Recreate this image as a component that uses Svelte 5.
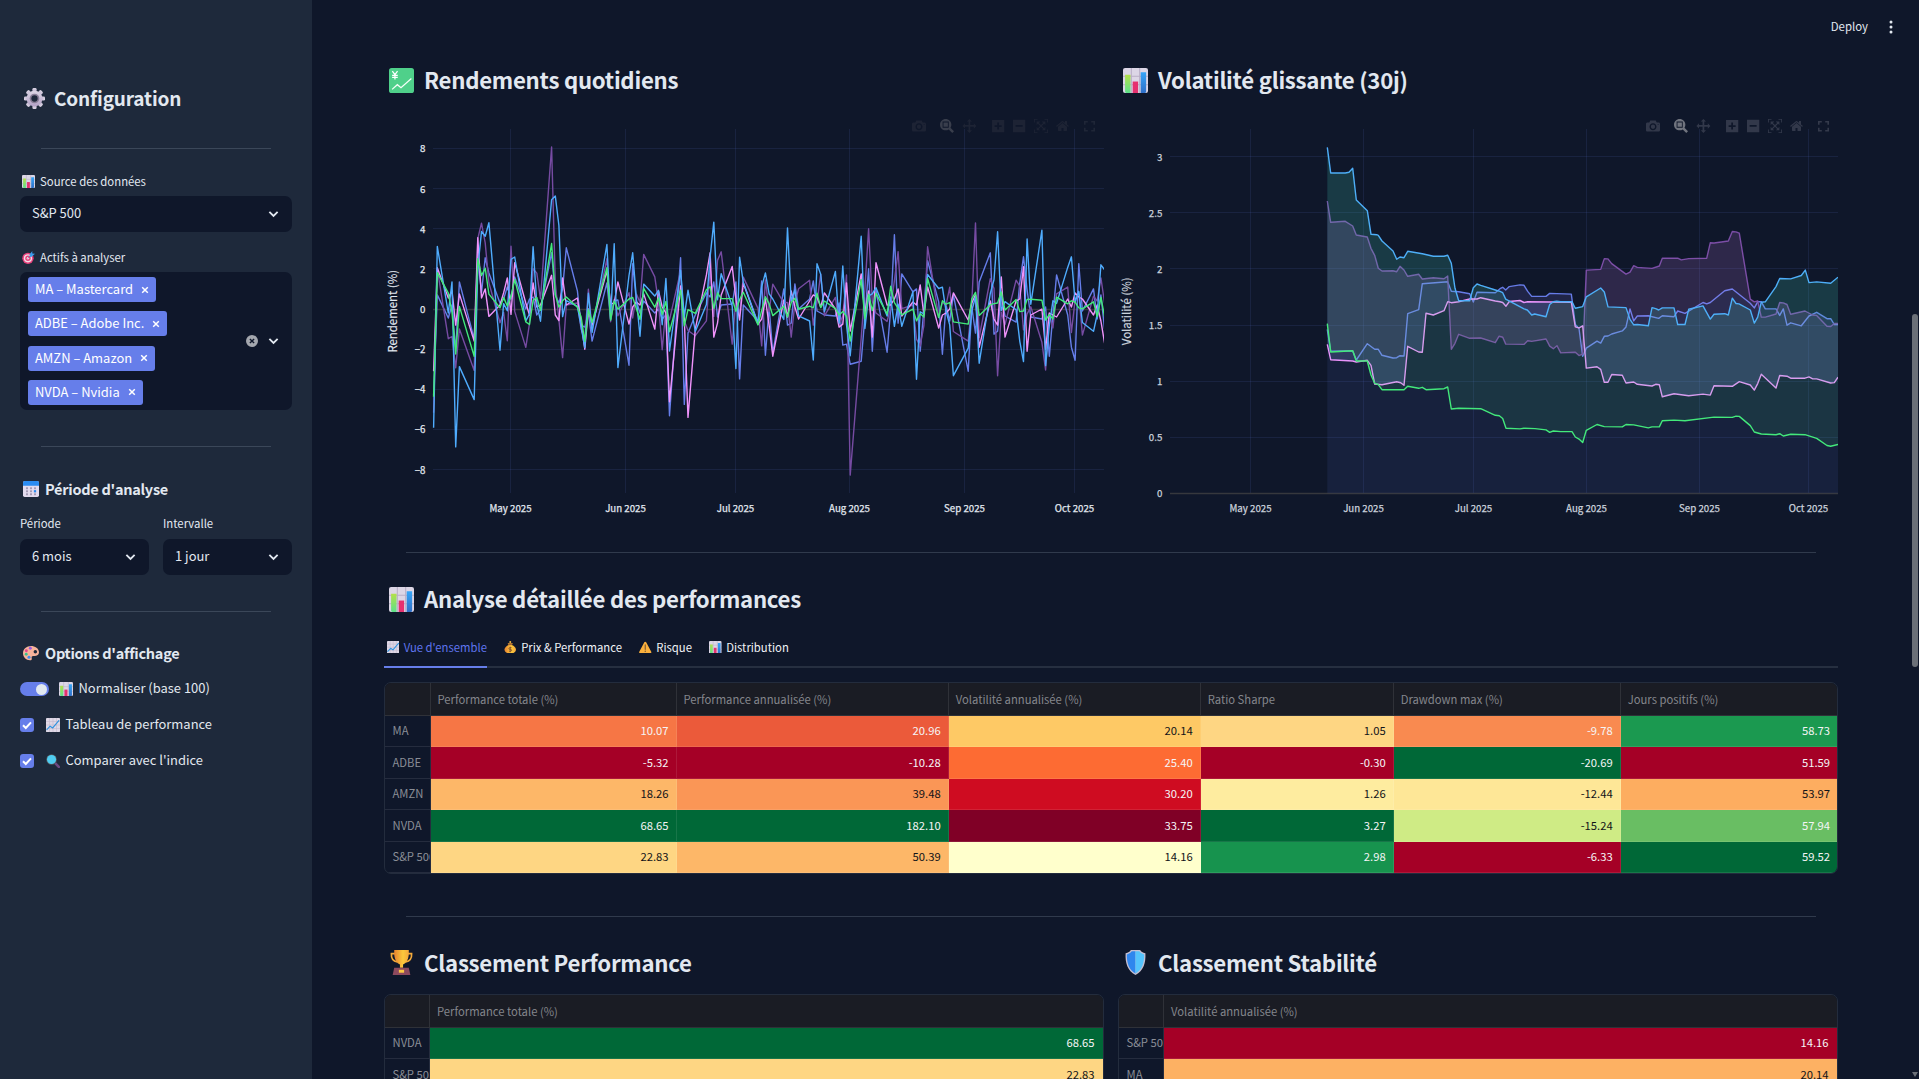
<script>
  const C = { adbe: '#667eea', amzn: '#764ba2', ma: '#f093fb', nvda: '#4facfe', spx: '#43e97b' };

  // Trading days, counted from 10 April 2025
  const days = [0,1,4,5,6,7,11,12,13,14,15,18,19,20,21,22,25,26,27,28,29,32,33,34,35,36,39,40,41,42,43,47,48,49,50,53,54,55,56,57,60,61,62,63,64,67,68,69,71,74,75,76,77,78,81,82,83,84,88,89,90,91,92,95,96,97,98,99,102,103,104,105,106,109,110,111,112,113,116,117,118,119,120,123,124,125,126,127,130,131,132,133,134,137,138,139,140,141,145,146,147,148,151,152,153,154,155,158,159,160,161,162,165,166,167,168,169,172,173,174,175,176,179,180,181,182];

  const returns = [
    [C.adbe, [-4.3,.7,-.45,.2,-2.1,1.35,-1.5,2.5,.8,2.55,1.8,.3,.5,1.1,.5,1.6,0,.5,.6,-.3,0,2.8,.7,.3,1,3.05,.9,-.8,-.9,-.2,-1.6,1.3,-.5,.4,.45,-2.8,2.25,.4,-.2,.4,-.2,0,-.5,-.3,-5.32,2.55,-4.75,-1.2,-.3,.8,.6,1.35,-.4,.2,.25,1.35,-3.48,.2,-.6,1.4,-2.3,.1,-2.2,1,-.8,-.7,1.25,0,.5,1.4,-.1,-.2,-.3,-.35,.3,-1.8,-1.75,-2.75,-2.6,-.4,2,-2.1,.95,-2.15,0,3.7,-.7,1.75,.85,1,-2.1,0,2.4,.35,-2.25,.2,-.6,.7,-3.1,.1,-1.2,1.35,2.8,-1.25,-1.1,.7,-.35,-.65,1.3,2.6,.95,-.4,-.5,.1,-2.35,-.3,1.7,-.3,-1.9,-2.55,2.25,-.1,1,-.5,.7,-1]],
    [C.amzn, [-5.17,2.01,-1.48,-1.37,-2.93,-.99,-3.06,3.5,4.28,3.29,1.31,-.68,-.17,-1.58,3.13,-.12,-1.91,-.72,2,1.79,.51,8.07,1.31,-.53,-2.42,.2,.3,-1.01,-1.45,.98,-1.04,2.5,-.63,.48,-.34,.81,-.45,.74,.33,2.72,1.6,.32,-2.03,.02,-.54,1.89,-.59,-1.07,-1.33,-.59,2.06,-.37,2.42,2.85,-1.75,.49,-.24,1.59,.03,-1.84,1.45,-.13,1.24,.3,.33,-1.4,.31,1.01,1.43,-.8,.34,1.74,-.34,.58,-.76,-.35,1.7,-8.27,-1.44,.99,4,.37,-.2,-.62,.08,1.4,2.86,.02,.2,-1.5,-1.84,-.83,3.1,-.39,.34,.18,1.08,-1.12,-1.6,.29,4.29,-1.42,1.51,1.02,-3.32,-.16,-.78,1.44,1.13,-1.04,-.24,.11,-1.66,-3.04,-.23,-.94,.75,1.09,-1.17,.46,.8,-1.3,.63,.4,1.55,.3]],
    [C.ma, [-3.1,2.05,.55,.9,-.8,.75,-1.6,3.55,.55,1,-.37,.2,.8,1.55,-.27,2.3,.3,-.3,1.3,.1,.2,1.68,-.3,-.58,1.55,.2,.55,-.7,-2,0,-.8,1.9,.25,.3,1.35,-.75,.1,.35,.2,.75,-1,.9,.1,-.2,-4.62,1.15,-.5,-5.4,-1,1.7,2.8,-1.4,-.7,.7,2.12,.5,-.55,1.3,-.75,-.5,.5,-.8,-2.35,.45,-.4,.9,.1,-.5,.4,.7,.6,.1,.8,0,-.9,-.75,1.3,-1.1,1.75,-.2,.9,-1.4,2.3,.2,.2,.5,1,-.35,.35,.2,1.2,-.3,1.1,-.95,-.3,-.2,0,.8,-.55,.3,.7,-1.9,.4,-.5,-.8,1.6,-1.4,.4,.5,2.1,-2.1,-.3,0,-2,-.2,-.3,-.4,.5,.1,.8,.6,.5,-.3,.2,-.6,-1.7]],
    [C.nvda, [-5.91,3.12,-.2,1.35,-6.87,-2.87,-4.51,2.04,3.86,3.62,4.3,-2.05,.27,-.09,2.47,2.59,-.59,-.25,3.1,.26,-.61,5.44,5.63,4.16,-.38,.42,.13,-.88,-1.92,.78,-1.16,3.21,-.51,3.25,-2.92,1.67,2.8,.5,-1.36,1.24,.64,.93,-.78,1.52,-2.09,1.92,-.39,.94,-1.12,.22,2.59,4.33,.46,1.76,.15,-2.97,2.58,1.33,-.69,1.11,1.8,.75,.5,-.52,4.04,.39,.95,-.34,-.6,-2.54,2.25,1.73,-.14,1.87,-.7,2.14,-.78,-2.33,3.62,-.97,.65,.75,1.06,-.35,.6,-.86,.24,-.86,.86,-3.5,-.14,-.24,1.72,1.02,1.09,-.09,-.79,-3.32,-1.95,-.09,.61,-2.7,.77,1.46,3.85,-.08,.37,-.04,-1.61,-2.62,3.49,.24,3.93,-2.82,-.82,.41,.28,2.07,2.6,.35,.88,-.67,-1.11,-.27,2.2,1.95]],
    [C.spx, [-4.37,1.81,.79,-.17,-2.24,.13,-2.36,2.51,1.67,2.03,.74,.06,.58,.15,.63,1.47,-.64,-.77,.43,.58,-.07,3.26,.72,.1,.41,.6,.09,-.39,-1.61,-.04,-.67,2.05,-.56,.4,-.01,.5,.58,.01,-.53,1.03,.09,.55,-.27,.38,-1.13,.94,-.84,-.03,-.22,.96,1.11,.03,.8,.52,.52,-.11,.47,.83,-.79,-.07,.61,.27,-.33,.14,-.4,.32,.54,-.01,.14,.06,.78,.07,.4,.02,-.3,-.12,-.37,-1.6,1.47,-.49,.73,-.08,.78,-.25,1.13,.32,.03,-.29,-.01,-.59,-.24,-.4,1.52,-.43,.41,.24,.32,-.64,-.75,.51,.83,-.32,.21,.27,.3,.85,-.05,.47,-.13,-.1,.48,.49,.44,-.55,-.28,-.5,.59,.26,.41,.34,.06,.01,.36,-.38,.58,-.4]]
  ].map(([color, values]) => ({
    color,
    points: values.map((v, i) => `${(433.6 + days[i] * 3.6866).toFixed(1)},${(309 - v * 20.08).toFixed(1)}`).join(' ')
  }));

  // The volatility curves are stored as two stretches on separate fine grids
  const spring = (s) => s.split(' ').map((p) => p.split(',').map(Number)).map(([x, y]) => [1110 + x / 3, 50 + y / 3]);
  const autumn = (s) => s.split(' ').map((p) => p.split(',').map(Number)).map(([x, y]) => [1500 + x / 3, y / 2.9585]);
  const volCurves = [
    [C.adbe, '652,838 662,904 728,902 739,930 772,881 794,898 805,898 816,916 849,924 860,923 870,917 882,918 893,791 926,779 937,701 1013,695 1024,724 1046,725 1079,731 1090,756 1101,727 1156,728',
      '0,854 8,850 17,858 28,848 60,843 72,844 83,862 95,877 138,877 149,868 214,870 226,960 237,972 248,1054 259,1030 291,1009 302,1015 313,995 324,994 335,988 367,979 378,967 390,914 401,949 412,935 445,934 476,942 487,934 522,937 533,920 555,927 609,895 620,899 631,895 674,860 697,855 751,897 763,911 773,893 784,893 796,914 828,914 839,933 850,914 861,962 872,955 904,964 927,935 950,924 981,943 992,943 1003,960 1014,960'],
    [C.amzn, '652,453 662,517 706,514 728,528 739,555 772,561 783,595 794,616 805,655 816,663 849,662 860,665 870,649 882,660 893,679 926,673 937,687 970,683 1002,686 1013,678 1024,898 1035,880 1046,853 1079,865 1112,864 1156,878 1167,859',
      '8,998 17,1018 72,1019 83,1008 95,1010 138,1003 149,1024 160,1032 171,1023 182,1044 226,1042 237,1052 248,1048 259,799 302,797 313,765 324,766 335,780 378,811 390,805 401,786 412,791 456,794 478,787 487,764 533,764 544,769 566,765 620,764 631,718 642,719 685,713 697,685 708,686 718,690 751,885 763,893 773,890 784,938 796,938 828,929 839,895 850,896 861,901 872,930 915,920 938,932 950,933 981,965 992,966 1003,957 1014,957'],
    [C.ma, '652,883 662,929 728,933 739,936 772,931 783,946 794,1002 816,1004 860,995 872,998 882,1006 893,889 926,906 937,907 948,790 970,795 1002,782 1013,755 1024,758 1046,755 1079,747 1101,747 1112,743 1156,753',
      '0,893 8,895 18,906 28,892 60,889 72,895 83,893 214,894 226,967 237,970 248,964 259,1089 291,1085 302,1093 313,1131 324,1131 335,1108 367,1110 378,1133 401,1130 412,1137 456,1142 467,1137 478,1138 487,1174 522,1165 566,1171 609,1166 631,1169 642,1141 697,1143 718,1129 751,1139 763,1154 773,1135 784,1107 828,1148 839,1111 861,1113 872,1119 915,1119 927,1115 938,1121 950,1121 992,1133 1003,1132 1014,1116'],
    [C.nvda, '652,292 662,369 706,369 717,367 728,355 739,450 772,482 783,553 800,554 805,556 816,573 849,603 860,628 870,621 882,623 893,604 937,611 970,619 1002,619 1013,616 1024,640 1035,715 1046,752 1079,752 1090,713 1101,702 1112,706 1156,720',
      '0,862 8,866 17,885 72,914 82,917 95,932 104,929 138,937 149,901 160,893 170,891 182,893 216,893 226,912 248,907 259,878 302,852 313,864 324,908 378,910 390,945 401,961 412,960 445,964 456,910 467,913 476,917 487,911 522,911 533,960 555,960 566,915 609,905 620,925 631,944 642,930 674,928 685,932 697,882 708,898 717,899 751,917 763,956 773,938 784,894 796,893 828,848 839,824 872,825 904,815 916,799 927,836 950,834 992,838 1014,820'],
    [C.spx, '652,821 662,906 728,902 739,933 772,933 783,975 794,1000 805,1004 816,1019 882,1019 893,1009 926,1015 937,1012 948,1019 1002,1016 1013,1011 1024,1077 1046,1075 1112,1076 1156,1096 1168,1097',
      '8,1238 18,1267 60,1269 72,1267 105,1268 138,1272 149,1279 160,1275 182,1277 216,1277 226,1293 237,1299 248,1309 259,1273 291,1256 313,1262 367,1263 378,1256 401,1257 445,1266 456,1263 478,1263 487,1245 522,1243 555,1245 642,1234 697,1235 708,1231 718,1232 751,1259 763,1278 784,1284 828,1286 839,1283 850,1290 872,1285 915,1286 950,1297 981,1318 992,1320 1014,1315']
  ].map(([color, a, b]) => ({ color, pts: [...spring(a), ...autumn(b)] }));
  const join = (pts) => pts.map(([x, y]) => `${x.toFixed(1)},${y.toFixed(1)}`).join(' ');
  const base = [[1327.3, 493.3], [1838, 493.3]];
  const vols = volCurves.map((c, i) => {
    const below = i ? volCurves[i - 1].pts : base;
    return { color: c.color, line: join(c.pts), area: join([...c.pts, ...[...below].reverse()]) };
  });

  const retY = [8, 6, 4, 2, 0, -2, -4, -6, -8].map((v) => ({ v: String(v).replace('-', '−'), y: 309 - v * 20.08 }));
  const volY = [3, 2.5, 2, 1.5, 1, 0.5, 0].map((v) => ({ v, y: 493.3 - v * 112.2 }));
  const months = ['May', 'Jun', 'Jul', 'Aug', 'Sep', 'Oct'];
  const retX = [510.5, 625.5, 735.5, 849.5, 964.5, 1074.5];
  const volX = [1250.5, 1363.5, 1473.5, 1586.5, 1699.5, 1808.5];

  const tools = [
    [0, 1000, 'm500 450c-83 0-150-67-150-150 0-83 67-150 150-150 83 0 150 67 150 150 0 83-67 150-150 150z m400 150h-120c-16 0-34 13-39 29l-31 93c-6 15-23 28-40 28h-340c-16 0-34-13-39-28l-31-94c-6-15-23-28-40-28h-120c-55 0-100-45-100-100v-450c0-55 45-100 100-100h800c55 0 100 45 100 100v450c0 55-45 100-100 100z m-400-550c-138 0-250 112-250 250 0 138 112 250 250 250 138 0 250-112 250-250 0-138-112-250-250-250z m365 380c-19 0-35 16-35 35 0 19 16 35 35 35 19 0 35-16 35-35 0-19-16-35-35-35z'],
    [28, 1000, 'm1000-25l-250 251c40 63 63 138 63 218 0 224-182 406-407 406-224 0-406-182-406-406s183-406 407-406c80 0 155 22 218 62l250-250 125 125z m-812 250l0 438 437 0 0-438-437 0z m62 375l313 0 0-312-313 0 0 312z'],
    [50.4, 1000, 'm1000 350l-187 188 0-125-250 0 0 250 125 0-188 187-187-187 125 0 0-250-250 0 0 125-188-188 186-187 0 125 252 0 0-250-125 0 187-188 188 188-125 0 0 250 250 0 0-126 187 188z'],
    [80, 875, 'm1 787l0-875 875 0 0 875-875 0z m687-500l-187 0 0-187-125 0 0 187-188 0 0 125 188 0 0 187 125 0 0-187 187 0 0-125z'],
    [101, 875, 'm0 788l0-876 876 0 0 876-876 0z m688-500l-500 0 0 125 500 0 0-125z'],
    [122, 1000, 'm250 850l-187 0-63 0 0-62 0-188 63 0 0 188 187 0 0 62z m688 0l-188 0 0-62 188 0 0-188 62 0 0 188 0 62-62 0z m-875-938l0 188-63 0 0-188 0-62 63 0 187 0 0 62-187 0z m875 188l0-188-188 0 0-62 188 0 62 0 0 62 0 188-62 0z m-125 188l-1 0-93-94-156 156 156 156 92-93 2 0 0 250-250 0 0-2 93-92-156-156-156 156 94 92 0 2-250 0 0-250 0 0 93 93 157-156-157-156-93 94 0 0 0-250 250 0 0 0-94 93 156 157 156-157-93-93 0 0 250 0 0 250z'],
    [144, 929, 'm786 296v-267q0-15-11-26t-25-10h-214v214h-143v-214h-214q-15 0-25 10t-11 26v267q0 1 0 2t0 2l321 264 321-264q1-1 1-4z m124 39l-34-41q-5-5-12-6h-2q-7 0-12 3l-386 322-386-322q-7-4-13-4-7 2-12 7l-35 41q-4 5-3 13t6 12l401 334q18 15 42 15t43-15l136-114v109q0 8 5 13t13 5h107q8 0 13-5t5-13v-227l122-102q5-5 6-12t-4-13z']
  ];

  const chips = ['MA – Mastercard', 'ADBE – Adobe Inc.', 'AMZN – Amazon', 'NVDA – Nvidia'];
  const tabs = [['trend', "Vue d'ensemble"], ['money', 'Prix & Performance'], ['warn', 'Risque'], ['bars', 'Distribution']];

  const L = '#f5f5f6', D = '#111318';
  const cols = ['Performance totale (%)', 'Performance annualisée (%)', 'Volatilité annualisée (%)', 'Ratio Sharpe', 'Drawdown max (%)', 'Jours positifs (%)'];
  const rows = [
    ['MA', [['10.07', '#f67645', L], ['20.96', '#eb5a3a', L], ['20.14', '#fec965', D], ['1.05', '#fed683', D], ['-9.78', '#f98a50', L], ['58.73', '#1b9950', L]]],
    ['ADBE', [['-5.32', '#a50026', L], ['-10.28', '#a50026', L], ['25.40', '#fd6b33', L], ['-0.30', '#a50026', L], ['-20.69', '#006837', L], ['51.59', '#a50026', L]]],
    ['AMZN', [['18.26', '#fdb768', D], ['39.48', '#fa9656', D], ['30.20', '#cf0c21', L], ['1.26', '#feec9f', D], ['-12.44', '#fee797', D], ['53.97', '#fdad60', D]]],
    ['NVDA', [['68.65', '#006837', L], ['182.10', '#006837', L], ['33.75', '#800026', L], ['3.27', '#006837', L], ['-15.24', '#cfeb85', D], ['57.94', '#69be63', L]]],
    ['S&P 500', [['22.83', '#fed683', D], ['50.39', '#fdb768', D], ['14.16', '#ffffcc', D], ['2.98', '#17934e', L], ['-6.33', '#a50026', L], ['59.52', '#006837', L]]]
  ];
  const rankings = [
    { icon: 'cup', title: 'Classement Performance', cols: ['Performance totale (%)'], rows: [['NVDA', [['68.65', '#006837', L]]], ['S&P 500', [['22.83', '#fed683', D]]]] },
    { icon: 'shield', title: 'Classement Stabilité', cols: ['Volatilité annualisée (%)'], rows: [['S&P 500', [['14.16', '#a50026', L]]], ['MA', [['20.14', '#fdb163', D]]]] }
  ];
</script>

<svelte:head><title>Configuration</title></svelte:head>

<svg class="defs" aria-hidden="true">
  <defs>
    <linearGradient id="lime" x1="0" y1="0" x2="0" y2="1"><stop offset="0" stop-color="#b4e04a" /><stop offset="1" stop-color="#5de08a" /></linearGradient>
    <linearGradient id="azure" x1="0" y1="0" x2="0" y2="1"><stop offset="0" stop-color="#36a6f8" /><stop offset="1" stop-color="#2f6fc8" /></linearGradient>
    <linearGradient id="gold" x1="0" y1="0" x2="1" y2="0"><stop offset="0" stop-color="#e8822f" /><stop offset=".6" stop-color="#fcc93c" /><stop offset="1" stop-color="#f5a73a" /></linearGradient>
    <linearGradient id="steel" x1="0" y1="0" x2="0" y2="1"><stop offset="0" stop-color="#dcd6e4" /><stop offset="1" stop-color="#b3a1c6" /></linearGradient>
  </defs>
</svg>

{#snippet icon(name)}
  <svg class="ico" viewBox="0 0 24 24">
    {#if name === 'bars'}
      <rect width="24" height="24" rx="2" fill="#dcd6e6" />
      <path d="M8 0v24M16 0v24M0 8h24M0 16h24" stroke="#b9afc6" stroke-width="1" />
      <path d="M2 6.500h5.200v17.500h-3.700a1.500 1.500 0 0 1-1.500-1.500z" fill="url(#lime)" />
      <rect x="9.300" y="13" width="5.200" height="11" fill="#e6316f" />
      <path d="M17 4h5.200v18.500a1.500 1.500 0 0 1-1.500 1.500h-3.700z" fill="url(#azure)" />
    {:else if name === 'trend'}
      <rect width="24" height="24" rx="1.500" fill="#dfd8e6" />
      <path d="M6 0v24M12 0v24M18 0v24M0 6h24M0 12h24M0 18h24" stroke="#c2b8cd" stroke-width="1" />
      <path d="M1.500 20 7 14l4.500 3L22 4.500" fill="none" stroke="#2f93e0" stroke-width="2" stroke-linecap="round" stroke-linejoin="round" />
    {:else if name === 'yen'}
      <rect width="24" height="24" rx="2.500" fill="#4fd08a" />
      <path d="M3 20.500 8 16l3.500 3L21.500 10" fill="none" stroke="#f4fff8" stroke-width="1.200" />
      <path d="m3.200 3 2.500 3.400L8.200 3M5.700 6.400V11M3 7h5.400M3 9h5.400" fill="none" stroke="#fff" stroke-width="1.200" />
    {:else if name === 'gear'}
      <g fill="url(#steel)">
        {#each [0, 45, 90, 135, 180, 225, 270, 315] as a}<rect x="9.600" y="0" width="4.800" height="7" rx="1.500" transform="rotate({a} 12 12)" />{/each}
        <path fill-rule="evenodd" d="M12 3a9 9 0 1 1 0 18 9 9 0 0 1 0-18z" />
      </g>
      <circle cx="12" cy="12" r="5.500" fill="#8a7f98" />
      <circle cx="12" cy="12" r="3.600" fill="#1e293b" />
    {:else if name === 'target'}
      <circle cx="11" cy="13.500" r="10.500" fill="#e8407c" />
      <circle cx="11" cy="13.500" r="7.600" fill="#f3dbe6" />
      <circle cx="11" cy="13.500" r="5" fill="#e8407c" />
      <circle cx="11" cy="13.500" r="2.200" fill="#f3dbe6" />
      <path d="M11 13.500 18 6.500" stroke="#7f6a8a" stroke-width="1.600" />
      <path d="M14 6.500 19 0v4.500L24 5l-6 5.500-4 .5z" fill="#3a9bea" />
    {:else if name === 'calendar'}
      <rect width="24" height="24" rx="2.500" fill="#e3dbee" />
      <path d="M2.500 0h19A2.500 2.500 0 0 1 24 2.500V7H0V2.500A2.500 2.500 0 0 1 2.500 0z" fill="#2b8cf2" />
      <g fill="#a59bb5">
        {#each [9.5, 14, 18.5] as y}{#each [4.5, 10.5, 16.5] as x}<rect {x} {y} width="3" height="2.800" />{/each}{/each}
      </g>
      <rect x="16.300" y="13.800" width="3.400" height="3.200" fill="#2b8cf2" />
    {:else if name === 'palette'}
      <path d="M12 1.500C5.500 1.500 0 6 0 12.500 0 18 4.500 23 10.500 23c2.500 0 3-1.500 2.600-3.200-.5-2.200.4-3.600 2.600-3.300 4.300.6 8.300-1 8.300-5.500 0-6-6-9.500-12-9.500z" fill="#f8b39b" />
      <circle cx="5" cy="8.500" r="2.200" fill="#e8458b" /><circle cx="11" cy="5" r="2.200" fill="#9a5be0" />
      <circle cx="4.800" cy="14" r="2.200" fill="#3fc28d" /><circle cx="9" cy="18.500" r="2.300" fill="#3a8ff0" />
      <circle cx="18.500" cy="10" r="2.600" fill="#1e293b" />
    {:else if name === 'magnifier'}
      <path d="m14 14 8 8" stroke="#6d4a82" stroke-width="4.500" stroke-linecap="round" />
      <circle cx="9.500" cy="9.500" r="9" fill="#54585f" /><circle cx="9.500" cy="9.500" r="7.800" fill="#4fcdf2" />
    {:else if name === 'money'}
      <circle cx="12" cy="2" r="1.900" fill="#f5b542" />
      <path d="M7 4.500h10L15 8H9z" fill="#e89a35" />
      <path d="M9 7.500h6c4.500 1.800 8 5 8 9 0 4.500-3.500 7.500-11 7.500S1 21 1 16.500c0-4 3.500-7.200 8-9z" fill="url(#gold)" />
      <path d="M8.500 7h7" stroke="#8d5330" stroke-width="1.600" />
      <path d="M14.500 12.800h-3.300a1.600 1.600 0 0 0 0 3.400h1.700a1.600 1.600 0 0 1 0 3.400H9.500M12 11v10.500" fill="none" stroke="#7d4a2b" stroke-width="1.600" />
    {:else if name === 'warn'}
      <path d="M12 1.200c.8 0 1.400.5 1.800 1.300l9.700 18c.7 1.500 0 2.900-1.600 2.900H2.100C.5 23.400-.2 22 .5 20.500l9.700-18c.4-.8 1-1.300 1.800-1.300z" fill="#fbb03c" />
      <path d="M12 7.500v8.500" stroke="#7a5a35" stroke-width="2.200" stroke-linecap="round" /><circle cx="12" cy="19.800" r="1.400" fill="#7a5a35" />
    {:else if name === 'cup'}
      <path d="M6 3.500H2.300C2 8 4 10.800 8 11.500M18 3.500h3.700C22 8 20 10.800 16 11.500" fill="none" stroke="#f2a93b" stroke-width="1.600" />
      <path d="M5 0h14v3c0 5-2 9.500-5.500 10.800V17h-3v-3.200C7 12.500 5 8 5 3z" fill="url(#gold)" />
      <path d="M5 17h14l1.500 7h-17z" fill="#8d4a5d" /><rect x="9.500" y="19" width="5" height="2.800" fill="#fbc843" />
    {:else if name === 'shield'}
      <path d="M7.500 0h9c.8 1.600 2.500 2.600 5 3.200.5 9.500-1.800 16.800-9.500 20.800C4.300 20 2 12.700 2.500 3.200 5 2.600 6.700 1.600 7.500 0z" fill="#c5bfd2" />
      <path d="M12 1.200V22.600C5.800 19 3.500 12.500 3.700 4.200 6 3.600 7.600 2.600 8.300 1.200z" fill="#2f86ee" />
      <path d="M12 1.200V22.600C18.200 19 20.500 12.500 20.300 4.200 18 3.600 16.400 2.600 15.700 1.200z" fill="#55c4fd" />
    {/if}
  </svg>
{/snippet}

{#snippet chevron()}
  <svg class="chev" viewBox="0 0 12 8"><path d="M1.500 1.700 6 6.100l4.500-4.400" fill="none" stroke="#e2e8f0" stroke-width="2" /></svg>
{/snippet}

{#snippet modebar(x, cls)}
  <g class={cls}>
    {#each tools as [dx, w, d], i}
      <g class:active={i === 1} transform="translate({x + dx} 119) scale(.014)"><path transform="matrix(1 0 0 -1 0 850)" {d} /></g>
    {/each}
    <path class="corners" transform="translate({x + 172} 121)" d="M.8 3.800v-3h3M7.200.8h3v3M10.200 6.700v3h-3M3.800 9.700h-3v-3" />
  </g>
{/snippet}

{#snippet grid(cls, columns, data)}
  <div class="grid {cls}">
    <div class="tr head"><span></span>{#each columns as c}<span>{c}</span>{/each}</div>
    {#each data as [label, cells]}
      <div class="tr"><span class="lbl">{label}</span>{#each cells as [v, bg, fg]}<span class="val" style="background:{bg};color:{fg}">{v}</span>{/each}</div>
    {/each}
  </div>
{/snippet}

<div class="app">
  <aside>
    <h2>{@render icon('gear')}Configuration</h2>
    <hr />
    <div class="field first">
      <div class="label">{@render icon('bars')}Source des données</div>
      <div class="select"><span>S&amp;P 500</span>{@render chevron()}</div>
    </div>
    <div class="field">
      <div class="label">{@render icon('target')}Actifs à analyser</div>
      <div class="multi">
        <div class="chips">
          {#each chips as c}
            <span class="chip">{c}<svg viewBox="0 0 8 8"><path d="m1.200 1.200 5.600 5.600M6.800 1.200 1.200 6.800" stroke="#fff" stroke-width="1.500" /></svg></span>
          {/each}
        </div>
        <svg class="clear" viewBox="0 0 12 12"><circle cx="6" cy="6" r="6" fill="#a4a7ae" /><path d="m3.900 3.900 4.200 4.200M8.100 3.900 3.900 8.100" stroke="#0f172a" stroke-width="1.400" /></svg>
        {@render chevron()}
      </div>
    </div>
    <hr class="second" />
    <h3>{@render icon('calendar')}Période d'analyse</h3>
    <div class="pair">
      <div><div class="label">Période</div><div class="select"><span>6 mois</span>{@render chevron()}</div></div>
      <div><div class="label">Intervalle</div><div class="select"><span>1 jour</span>{@render chevron()}</div></div>
    </div>
    <hr class="third" />
    <h3 class="opts">{@render icon('palette')}Options d'affichage</h3>
    <div class="opt"><span class="toggle"></span>{@render icon('bars')}Normaliser (base 100)</div>
    <div class="opt"><span class="check"><svg viewBox="0 0 14 14"><path d="m3 7.300 2.800 2.700 5.200-5.600" fill="none" stroke="#fff" stroke-width="2" /></svg></span>{@render icon('trend')}Tableau de performance</div>
    <div class="opt"><span class="check"><svg viewBox="0 0 14 14"><path d="m3 7.300 2.800 2.700 5.200-5.600" fill="none" stroke="#fff" stroke-width="2" /></svg></span>{@render icon('magnifier')}Comparer avec l'indice</div>
  </aside>

  <main>
    <header><span>Deploy</span><svg viewBox="0 0 4 14"><circle cx="2" cy="2" r="1.500" /><circle cx="2" cy="7" r="1.500" /><circle cx="2" cy="12" r="1.500" /></svg></header>

    <div class="two">
      <section>
        <h1>{@render icon('yen')}Rendements quotidiens</h1>
        <svg class="chart" viewBox="384 104 720 426">
          {#each retX as x}<path class="gl" d="M{x} 129V493" />{/each}
          {#each retY as t}
            <path class={t.v === '0' ? 'zero' : 'gl'} d="M433 {Math.floor(t.y)}.500H1104" />
            <text class="tick" x="425.500" y={t.y + 4} text-anchor="end">{t.v}</text>
          {/each}
          {#each months as m, i}<text class="tick" x={retX[i]} y="512" text-anchor="middle">{m} 2025</text>{/each}
          <text class="axis" transform="translate(397.300 311.300) rotate(-90)" text-anchor="middle">Rendement (%)</text>
          {#each returns as s}<polyline points={s.points} stroke={s.color} />{/each}
          {@render modebar(912, 'faint')}
        </svg>
      </section>
      <section>
        <h1>{@render icon('bars')}Volatilité glissante (30j)</h1>
        <svg class="chart dim" viewBox="1118 104 720 426">
          {#each volX as x}<path class="gl" d="M{x} 129V493" />{/each}
          {#each volY as t}
            <path class={t.v === 0 ? 'zero' : 'gl'} d="M1170 {Math.floor(t.y)}.500H1838" />
            <text class="tick" x="1162.300" y={t.y + 4} text-anchor="end">{t.v}</text>
          {/each}
          {#each months as m, i}<text class="tick" x={volX[i]} y="512" text-anchor="middle">{m} 2025</text>{/each}
          <text class="axis" transform="translate(1131.300 311.300) rotate(-90)" text-anchor="middle">Volatilité (%)</text>
          {#each vols as s}
            <polygon points={s.area} fill={s.color} />
            <polyline points={s.line} stroke={s.color} />
          {/each}
          {@render modebar(1646, 'shown')}
        </svg>
      </section>
    </div>

    <hr />
    <h1 class="mid">{@render icon('bars')}Analyse détaillée des performances</h1>
    <nav>
      {#each tabs as [ic, label], i}<span class:on={i === 0}>{@render icon(ic)}{label}</span>{/each}
    </nav>
    {@render grid('wide', cols, rows)}

    <hr class="low" />
    <div class="two">
      {#each rankings as r}
        <section>
          <h1 class="mid">{@render icon(r.icon)}{r.title}</h1>
          {@render grid('narrow', r.cols, r.rows)}
        </section>
      {/each}
    </div>
  </main>

  <div class="scroll"><i></i><b></b></div>
</div>

<style>
  :global(body) { overflow: hidden; background: #0f172a; }
  .defs { position: absolute; width: 0; height: 0; }
  .app {
    display: flex; height: 1079px; overflow: hidden; background: #0f172a; color: #e2e8f0;
    font-family: "Noto Sans CJK SC", "Noto Sans", sans-serif; font-size: 12.950px; position: relative;
  }
  aside, main { box-sizing: border-box; }
  aside { width: 312px; flex: none; background: #1e293b; padding: 82px 20px 0; }
  h1, h2, h3, hr { margin: 0; }
  h1, h2, h3, .label, .opt, .chip { box-sizing: border-box; padding-bottom: 2px; }
  hr { border: 0; height: 1px; background: #3b4759; }
  .ico { flex: none; display: block; }

  h2 { display: flex; align-items: center; height: 32px; font-size: 19px; padding-left: 4px; letter-spacing: -.150px; }
  h2 .ico { width: 21px; height: 21px; margin: 2px 9px 0 0; }
  aside hr { margin: 34px 21px 0; }
  .field.first { margin-top: 23px; }
  .field { margin-top: 16px; }
  .label { display: flex; align-items: center; height: 20px; font-size: 11.350px; line-height: 18px; margin-bottom: 4px; }
  .label .ico { width: 13px; height: 13px; margin: 1px 5px 0 2px; }
  .select { height: 36px; background: #0f172a; border-radius: 7px; display: flex; align-items: center; justify-content: space-between; padding: 0 12.600px 0 12px; }
  .select span { padding-bottom: 3px; }
  .chev { width: 11px; height: 8px; flex: none; }
  .multi { height: 138px; box-sizing: border-box; background: #0f172a; border-radius: 7px; display: flex; align-items: center; padding: 0 12.600px 0 8px; }
  .chips { flex: 1; display: flex; flex-direction: column; align-items: flex-start; gap: 9.300px; }
  .chip { background: #667eea; color: #fff; border-radius: 3px; height: 25px; display: flex; align-items: center; padding-left: 7px; padding-right: 7px; gap: 8px; }
  .chip svg { width: 8px; height: 8px; margin-top: 2px; }
  .clear { width: 12px; height: 12px; margin-right: 10.500px; }
  aside hr.second { margin-top: 36px; }
  h3 { display: flex; align-items: center; height: 24px; font-size: 14.500px; margin-top: 30px; padding-left: 3px; letter-spacing: -.270px; }
  h3 .ico { width: 16px; height: 16px; margin: 2px 6px 0 0; }
  .pair { display: flex; gap: 14px; margin-top: 13px; }
  .pair > div { flex: 1; }
  .pair .label { margin-bottom: 5px; }
  aside hr.third { margin-top: 36px; }
  h3.opts { margin-top: 29px; margin-bottom: 12px; }
  .opt { display: flex; align-items: center; height: 24px; margin-bottom: 12px; padding-bottom: 3px; }
  .opt .ico { width: 14px; height: 14px; margin: 2px 5.500px 0 0; }
  .toggle { width: 29px; height: 14px; border-radius: 7px; background: #667eea; margin: 3px 10px 0 0; display: flex; align-items: center; justify-content: flex-end; }
  .toggle::after { content: ""; width: 11px; height: 11px; border-radius: 50%; background: #e2e8f0; margin-right: 2px; }
  .check { width: 14px; height: 14px; border-radius: 3px; background: #667eea; margin: 3px 12px 0 0; display: flex; }
  .check svg { width: 14px; height: 14px; }

  main { flex: 1; padding: 0 81px 0 72px; min-width: 0; }
  header { height: 56px; display: flex; align-items: flex-start; justify-content: flex-end; gap: 21px; margin-right: -55px; padding-top: 16px; box-sizing: border-box; line-height: 20px; font-size: 11.400px; }
  header svg { width: 4px; height: 14px; margin-top: 4px; fill: #e2e8f0; }
  .two { display: grid; grid-template-columns: 720px 720px; gap: 14px; }
  h1 { display: flex; align-items: center; height: 48px; font-size: 22.200px; padding-left: 5px; letter-spacing: -.260px; white-space: nowrap; }
  h1 .ico { width: 25px; height: 25px; margin: 2px 10px 0 0; }
  .chart { display: block; width: 720px; height: 426px; font-family: "Noto Sans CJK SC", "Noto Sans", sans-serif; }
  .chart polyline { fill: none; stroke-width: 1.400; stroke-linejoin: round; }
  .chart polygon { fill-opacity: .1; }
  .gl { stroke: #667eea; stroke-opacity: .12; stroke-width: 1; }
  .zero { stroke: #444; stroke-opacity: .75; stroke-width: 1.500; }
  .tick { font-size: 9.700px; fill: #e2e8f0; stroke: #e2e8f0; stroke-width: .250px; }
  .axis { font-size: 11.400px; fill: #e2e8f0; stroke: #e2e8f0; stroke-width: .150px; }
  .dim .tick, .dim .axis { fill: #cbd2dc; }
  .dim .tick { stroke: #cbd2dc; }
  .faint { fill: #1d2334; stroke: none; }
  .faint .active { fill: #393e4c; }
  .shown { fill: #32384a; }
  .shown .active { fill: #70747e; }
  .corners { fill: none; stroke: #1f2637; stroke-width: 1.600; }
  .shown .corners { stroke: #343a4b; }

  main > hr { margin: 22px 22px 0; background: #303a4c; }
  .mid { margin-top: 22px; }
  nav { display: flex; gap: 14.500px; height: 39px; margin-top: 6px; box-sizing: border-box; border-bottom: 2px solid #262f40; font-size: 11.300px; }
  nav span { display: flex; align-items: center; height: 39px; box-sizing: border-box; border-bottom: 2px solid transparent; padding: 0 0 1.500px 2.600px; color: #f1f3f7; }
  nav .on { color: #5f75ee; border-color: #667eea; }
  nav .ico { width: 12.500px; height: 12.500px; margin-right: 4.700px; }

  .grid { box-sizing: border-box; border: 1px solid #232c3d; border-radius: 7px; overflow: hidden; margin-top: 14px; font-size: 11.250px; }
  .tr { display: grid; height: 31.400px; }
  .wide .tr { grid-template-columns: 45.500px 246px 272.200px 252px 193px 227px 1fr; }
  .narrow .tr { grid-template-columns: 45px 1fr; }
  .tr.head { height: 33px; background: #1a1c24; color: #84868c; }
  .tr span { display: flex; align-items: center; box-sizing: border-box; white-space: nowrap; overflow: hidden; min-width: 0; border-right: 1px solid #ffffff18; border-bottom: 1px solid #ffffff18; padding-bottom: 1.500px; }
  .tr span:last-child { border-right: 0; }
  .tr.head span { padding-left: 7px; padding-bottom: 0; }
  .tr .lbl { color: #8a8e97; padding-left: 7.500px; }
  .tr .val { justify-content: flex-end; padding-right: 7px; }
  .narrow .tr .val { padding-right: 8.500px; }
  .grid.narrow { margin-top: 7px; }
  main > hr.low { margin-top: 42px; }

  .scroll { position: absolute; right: 0; top: 0; width: 8px; height: 1079px; }
  .scroll i { position: absolute; left: 1px; top: 314px; width: 6px; height: 353px; border-radius: 3px; background: #6b7078; }
  .scroll b { position: absolute; left: 1px; top: 1072px; border: 3px solid transparent; border-top: 5px solid #6b7078; border-bottom: 0; }
</style>
